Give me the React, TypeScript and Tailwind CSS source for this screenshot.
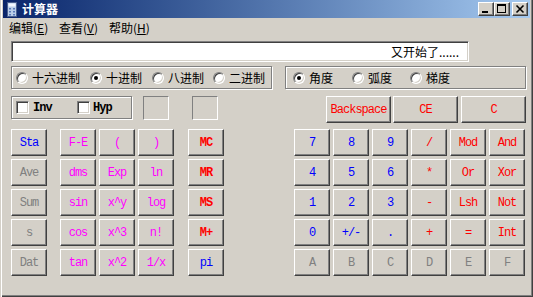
import React from "react";

type B = { t: string; c: string; b?: boolean };

const BLUE = "text-[#0000ff]";
const MAG = "text-[#ff00ff]";
const RED = "text-[#ff0000]";
const GRAY = "text-[#808080]";

const rows: { sta: B; fn: B[]; mem: B; right: B[] }[] = [
  {
    sta: { t: "Sta", c: BLUE },
    fn: [
      { t: "F-E", c: MAG },
      { t: "(", c: MAG },
      { t: ")", c: MAG },
    ],
    mem: { t: "MC", c: RED, b: true },
    right: [
      { t: "7", c: BLUE },
      { t: "8", c: BLUE },
      { t: "9", c: BLUE },
      { t: "/", c: RED },
      { t: "Mod", c: RED },
      { t: "And", c: RED },
    ],
  },
  {
    sta: { t: "Ave", c: GRAY },
    fn: [
      { t: "dms", c: MAG },
      { t: "Exp", c: MAG },
      { t: "ln", c: MAG },
    ],
    mem: { t: "MR", c: RED, b: true },
    right: [
      { t: "4", c: BLUE },
      { t: "5", c: BLUE },
      { t: "6", c: BLUE },
      { t: "*", c: RED },
      { t: "Or", c: RED },
      { t: "Xor", c: RED },
    ],
  },
  {
    sta: { t: "Sum", c: GRAY },
    fn: [
      { t: "sin", c: MAG },
      { t: "x^y", c: MAG },
      { t: "log", c: MAG },
    ],
    mem: { t: "MS", c: RED, b: true },
    right: [
      { t: "1", c: BLUE },
      { t: "2", c: BLUE },
      { t: "3", c: BLUE },
      { t: "-", c: RED },
      { t: "Lsh", c: RED },
      { t: "Not", c: RED },
    ],
  },
  {
    sta: { t: "s", c: GRAY },
    fn: [
      { t: "cos", c: MAG },
      { t: "x^3", c: MAG },
      { t: "n!", c: MAG },
    ],
    mem: { t: "M+", c: RED, b: true },
    right: [
      { t: "0", c: BLUE },
      { t: "+/-", c: BLUE },
      { t: ".", c: BLUE },
      { t: "+", c: RED },
      { t: "=", c: RED },
      { t: "Int", c: RED },
    ],
  },
  {
    sta: { t: "Dat", c: GRAY },
    fn: [
      { t: "tan", c: MAG },
      { t: "x^2", c: MAG },
      { t: "1/x", c: MAG },
    ],
    mem: { t: "pi", c: BLUE },
    right: [
      { t: "A", c: GRAY },
      { t: "B", c: GRAY },
      { t: "C", c: GRAY },
      { t: "D", c: GRAY },
      { t: "E", c: GRAY },
      { t: "F", c: GRAY },
    ],
  },
];

function Btn({ t, c, b, w = "w-[36px]", ml = "" }: B & { w?: string; ml?: string }) {
  return (
    <div
      className={`${w} ${ml} h-[27px] shrink-0 flex items-center justify-center bg-[#d4d0c8] border border-t-white border-l-white border-r-[#404040] border-b-[#404040] shadow-[inset_-1px_-1px_0_#808080] font-['Liberation_Mono',monospace] text-[12px] tracking-[-1px] leading-none ${c} ${b ? "font-bold" : ""}`}
    >
      {t}
    </div>
  );
}

function Radio({ on }: { on?: boolean }) {
  return (
    <span className="w-[12px] h-[12px] shrink-0 rounded-full bg-white border border-t-[#808080] border-l-[#808080] border-r-white border-b-white shadow-[inset_1px_1px_0_#404040,inset_-1px_-1px_0_#d4d0c8] flex items-center justify-center">
      {on && <span className="w-[4px] h-[4px] rounded-full bg-black" />}
    </span>
  );
}

function Check() {
  return (
    <span className="w-[13px] h-[13px] shrink-0 bg-white border border-t-[#808080] border-l-[#808080] border-r-white border-b-white shadow-[inset_1px_1px_0_#404040,inset_-1px_-1px_0_#d4d0c8]" />
  );
}

function RadioItem({ label, on, w }: { label: string; on?: boolean; w: string }) {
  return (
    <div className={`${w} shrink-0 flex items-center`}>
      <Radio on={on} />
      <span className="ml-[4px] text-[12px] leading-none text-black">{label}</span>
    </div>
  );
}

function TitleBtn({ children, ml = "" }: { children: React.ReactNode; ml?: string }) {
  return (
    <div className={`${ml} w-[16px] h-[14px] bg-[#d4d0c8] border border-t-white border-l-white border-r-[#404040] border-b-[#404040] shadow-[inset_-1px_-1px_0_#808080] flex`}>
      {children}
    </div>
  );
}

export default function App() {
  const group =
    "border border-[#808080] shadow-[inset_1px_1px_0_#ffffff,1px_1px_0_#ffffff]";
  return (
    <div className="w-[533px] h-[297px] bg-[#d4d0c8] flex flex-col font-['Noto_Sans_CJK_SC','Noto_Sans',sans-serif] shadow-[inset_1px_0_0_#d4d0c8,inset_2px_0_0_#ffffff,inset_-1px_-1px_0_#404040,inset_-2px_-2px_0_#808080] overflow-hidden">
      {/* Title bar */}
      <div className="mx-[3px] h-[18px] shrink-0 flex items-center bg-linear-to-r from-[#0a246a] to-[#a6caf0]">
        <svg className="ml-[4px]" width="10" height="15" viewBox="0 0 10 15">
          <rect x="0.5" y="0.5" width="9" height="14" fill="#b9cde8" stroke="#4a5f8f" />
          <rect x="1.5" y="1.5" width="7" height="3" fill="#f2f7ff" />
          <rect x="2" y="6" width="2" height="1.5" fill="#5878b8" />
          <rect x="6" y="6" width="2" height="1.5" fill="#5878b8" />
          <rect x="2" y="9" width="2" height="1.5" fill="#5878b8" />
          <rect x="6" y="9" width="2" height="1.5" fill="#5878b8" />
          <rect x="2" y="12" width="2" height="1.5" fill="#5878b8" />
          <rect x="6" y="12" width="2" height="1.5" fill="#5878b8" />
        </svg>
        <span className="ml-[5px] text-[12px] font-bold text-white leading-none">计算器</span>
        <div className="ml-auto mr-[2px] flex items-center">
          <TitleBtn>
            <svg width="14" height="12" viewBox="0 0 14 12">
              <rect x="3" y="8" width="6" height="2" fill="#000" />
            </svg>
          </TitleBtn>
          <TitleBtn>
            <svg width="14" height="12" viewBox="0 0 14 12">
              <rect x="2.5" y="1.5" width="8" height="8" fill="none" stroke="#000" />
              <rect x="2" y="1" width="9" height="2" fill="#000" />
            </svg>
          </TitleBtn>
          <TitleBtn ml="ml-[2px]">
            <svg width="14" height="12" viewBox="0 0 14 12">
              <path d="M3.5 2.5 L10.5 9.5 M10.5 2.5 L3.5 9.5" stroke="#000" strokeWidth="1.6" />
            </svg>
          </TitleBtn>
        </div>
      </div>

      {/* Menu */}
      <div className="h-[19px] shrink-0 flex items-center pl-[9px] text-[12px] leading-none text-black">
        <span className="w-[50px]">
          编辑(<span className="underline">E</span>)
        </span>
        <span className="w-[50px]">
          查看(<span className="underline">V</span>)
        </span>
        <span className="w-[50px]">
          帮助(<span className="underline">H</span>)
        </span>
      </div>

      <div className="flex flex-col pl-[11px]">
        {/* Display */}
        <div className="mt-[4px] w-[458px] h-[21px] bg-white border border-t-[#808080] border-l-[#808080] border-r-white border-b-white shadow-[inset_1px_1px_0_#404040,inset_-1px_-1px_0_#d4d0c8] flex items-center justify-end pr-[9px] text-[12px] leading-none text-black">
          又开始了......
        </div>

        {/* Radio groups */}
        <div className="mt-[4px] flex">
          <div className={`w-[261px] h-[23px] ${group} flex items-center pl-[4px]`}>
            <RadioItem w="w-[74px]" label="十六进制" />
            <RadioItem w="w-[62px]" label="十进制" on />
            <RadioItem w="w-[61px]" label="八进制" />
            <RadioItem w="w-[56px]" label="二进制" />
          </div>
          <div className={`ml-[13px] w-[241px] h-[23px] ${group} flex items-center pl-[7px]`}>
            <RadioItem w="w-[59px]" label="角度" on />
            <RadioItem w="w-[58px]" label="弧度" />
            <RadioItem w="w-[58px]" label="梯度" />
          </div>
        </div>

        {/* Row 3 */}
        <div className="mt-[7px] flex items-start">
          <div className={`w-[121px] h-[23px] ${group} flex items-center pl-[4px]`}>
            <div className="w-[61px] flex items-center">
              <Check />
              <span className="ml-[4px] font-['Liberation_Mono',monospace] text-[12px] tracking-[-1px] font-bold leading-none text-black">Inv</span>
            </div>
            <div className="flex items-center">
              <Check />
              <span className="ml-[3px] font-['Liberation_Mono',monospace] text-[12px] tracking-[-1px] font-bold leading-none text-black">Hyp</span>
            </div>
          </div>
          <div className="ml-[11px] w-[26px] h-[24px] border border-t-[#808080] border-l-[#808080] border-r-white border-b-white" />
          <div className="ml-[23px] w-[26px] h-[24px] border border-t-[#808080] border-l-[#808080] border-r-white border-b-white" />
          <Btn t="Backspace" c={RED} w="w-[65px]" ml="ml-[108px]" />
          <Btn t="CE" c={RED} w="w-[65px]" ml="ml-[2px]" />
          <Btn t="C" c={RED} w="w-[65px]" ml="ml-[3px]" />
        </div>

        {/* Button grid */}
        <div className="mt-[6px] flex flex-col gap-[3px]">
          {rows.map((r, i) => (
            <div key={i} className="flex">
              <Btn {...r.sta} />
              <Btn {...r.fn[0]} ml="ml-[13px]" />
              <Btn {...r.fn[1]} ml="ml-[3px]" />
              <Btn {...r.fn[2]} ml="ml-[3px]" />
              <Btn {...r.mem} ml="ml-[14px]" />
              <div className="ml-[70px] flex gap-[3px]">
                {r.right.map((b, j) => (
                  <Btn key={j} {...b} />
                ))}
              </div>
            </div>
          ))}
        </div>
      </div>
    </div>
  );
}
